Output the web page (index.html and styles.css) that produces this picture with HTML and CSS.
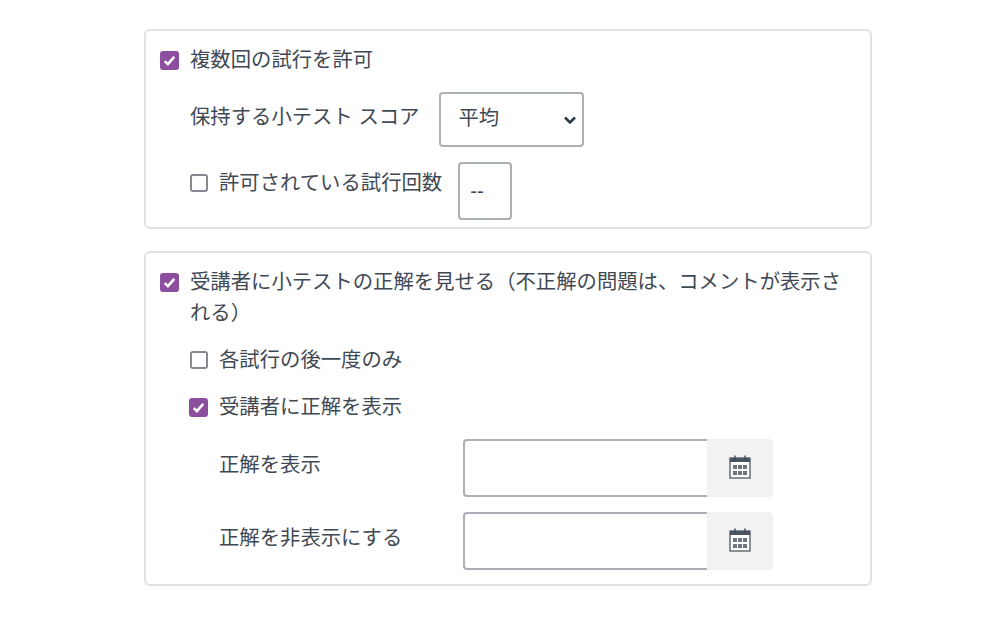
FILE: index.html
```html
<!DOCTYPE html>
<html lang="ja">
<head>
  <meta charset="UTF-8" />
  <title>小テスト設定</title>
  <link rel="stylesheet" href="styles.css">
</head>
<body>
  <div class="settings">
    <div class="card card-attempts">
      <label class="check-row">
        <span class="box checked"><svg viewBox="0 0 18 18"><path d="M4.5 9.5l3 3 6-7" /></svg></span>
        <span>複数回の試行を許可</span>
      </label>
      <div class="sub keep-row">
        <span class="field-label">保持する小テスト スコア</span>
        <div class="select">
          <span class="select-value">平均</span>
          <svg class="chevron" viewBox="0 0 14 10"><path d="M2 2.5l5 5 5-5" /></svg>
        </div>
      </div>
      <div class="sub limit-row">
        <label class="check-row">
          <span class="box"></span>
          <span>許可されている試行回数</span>
        </label>
        <div class="count-input">--</div>
      </div>
    </div>

    <div class="card card-answers">
      <label class="check-row wrap-row">
        <span class="box checked"><svg viewBox="0 0 18 18"><path d="M4.5 9.5l3 3 6-7" /></svg></span>
        <span>受講者に小テストの正解を見せる（不正解の問題は、コメントが表示される）</span>
      </label>
      <div class="sub once-row">
        <label class="check-row">
          <span class="box"></span>
          <span>各試行の後一度のみ</span>
        </label>
      </div>
      <div class="sub show-row">
        <label class="check-row">
          <span class="box checked"><svg viewBox="0 0 18 18"><path d="M4.5 9.5l3 3 6-7" /></svg></span>
          <span>受講者に正解を表示</span>
        </label>
      </div>
      <div class="date-row first-date">
        <span class="date-label">正解を表示</span>
        <div class="date-input"></div>
        <div class="date-btn">
          <svg viewBox="0 0 22 24"><rect x="1" y="3" width="20" height="20" fill="#fff" stroke="#3f4a56" stroke-width="1.2" /><rect x="1" y="3" width="20" height="4" fill="#4a5560" /><path d="M6 .5v5M16 .5v5" stroke="#3f4a56" stroke-width="1.4" /><path fill="#6d7680" d="M4 10h4v4H4zM9 10h4v4H9zM14 10h4v4h-4zM4 16h4v4H4zM9 16h4v4H9zM14 16h4v4h-4z" /></svg>
        </div>
      </div>
      <div class="date-row">
        <span class="date-label">正解を非表示にする</span>
        <div class="date-input"></div>
        <div class="date-btn">
          <svg viewBox="0 0 22 24"><rect x="1" y="3" width="20" height="20" fill="#fff" stroke="#3f4a56" stroke-width="1.2" /><rect x="1" y="3" width="20" height="4" fill="#4a5560" /><path d="M6 .5v5M16 .5v5" stroke="#3f4a56" stroke-width="1.4" /><path fill="#6d7680" d="M4 10h4v4H4zM9 10h4v4H9zM14 10h4v4h-4zM4 16h4v4H4zM9 16h4v4H9zM14 16h4v4h-4z" /></svg>
        </div>
      </div>
    </div>
  </div>
</body>
</html>
```

FILE: styles.css
```css
* {
  margin: 0;
  padding: 0;
  box-sizing: border-box;
}

body {
  font-family: "Liberation Sans", "Noto Sans CJK JP", sans-serif;
  font-size: 20.35px;
  line-height: 31px;
  color: #3f4953;
  background: #ffffff;
}

.settings {
  width: 728px;
  margin-left: 144px;
  padding-top: 29px;
  display: flex;
  flex-direction: column;
  gap: 22px;
}

.card {
  border: 2px solid #e0e1e3;
  border-radius: 6px;
  padding: 14px 14px 0;
}

.card-attempts {
  height: 200px;
}

.card-answers {
  height: 335px;
}

.check-row {
  display: flex;
  align-items: flex-start;
  gap: 11px;
}

.box {
  width: 18px;
  height: 18px;
  flex-shrink: 0;
  margin-top: 6px;
  border: 2px solid #85898f;
  border-radius: 3px;
  background: #ffffff;
}

.box.checked {
  width: 19px;
  height: 19px;
  border: none;
  background: #8c4f9f;
}

.sub .box.checked {
  margin-left: -1px;
}

.box svg {
  display: block;
  width: 19px;
  height: 19px;
}

.box svg path {
  fill: none;
  stroke: #ffffff;
  stroke-width: 2.4;
}

.sub {
  margin-left: 30px;
}

.keep-row {
  display: flex;
  align-items: center;
  gap: 20px;
  margin-top: 16px;
}

.field-label {
  margin-top: -5px;
}

.select {
  width: 145px;
  height: 55px;
  border: 2px solid #aab0b6;
  border-radius: 4px;
  padding-left: 17px;
  display: flex;
  align-items: center;
  justify-content: space-between;
}

.select-value {
  margin-top: -2px;
}

.chevron {
  width: 14px;
  height: 10px;
  margin-right: 5px;
}

.chevron path {
  fill: none;
  stroke: #2d3b45;
  stroke-width: 2.6;
}

.limit-row {
  display: flex;
  align-items: flex-start;
  gap: 16px;
  margin-top: 15px;
}

.limit-row .check-row {
  padding-top: 6px;
}

.count-input {
  width: 54px;
  height: 58px;
  border: 2px solid #aab0b6;
  border-radius: 4px;
  padding: 12px 0 0 10px;
}

.wrap-row {
  padding-right: 10px;
}

.once-row {
  margin-top: 16px;
}

.show-row {
  margin-top: 16px;
}

.date-row {
  display: flex;
  align-items: flex-start;
  margin: 15px 0 0 59px;
}

.first-date {
  margin-top: 16px;
}

.date-label {
  width: 244px;
  padding-top: 11px;
}

.date-input {
  width: 244px;
  height: 58px;
  border: 2px solid #aab0b6;
  border-right: none;
  border-radius: 4px 0 0 4px;
}

.date-btn {
  width: 66px;
  height: 58px;
  background: #f2f2f2;
  border: 1px solid #efefef;
  border-radius: 0 4px 4px 0;
  padding-bottom: 2px;
  display: flex;
  align-items: center;
  justify-content: center;
}

.date-btn svg {
  width: 22px;
  height: 24px;
}
```
